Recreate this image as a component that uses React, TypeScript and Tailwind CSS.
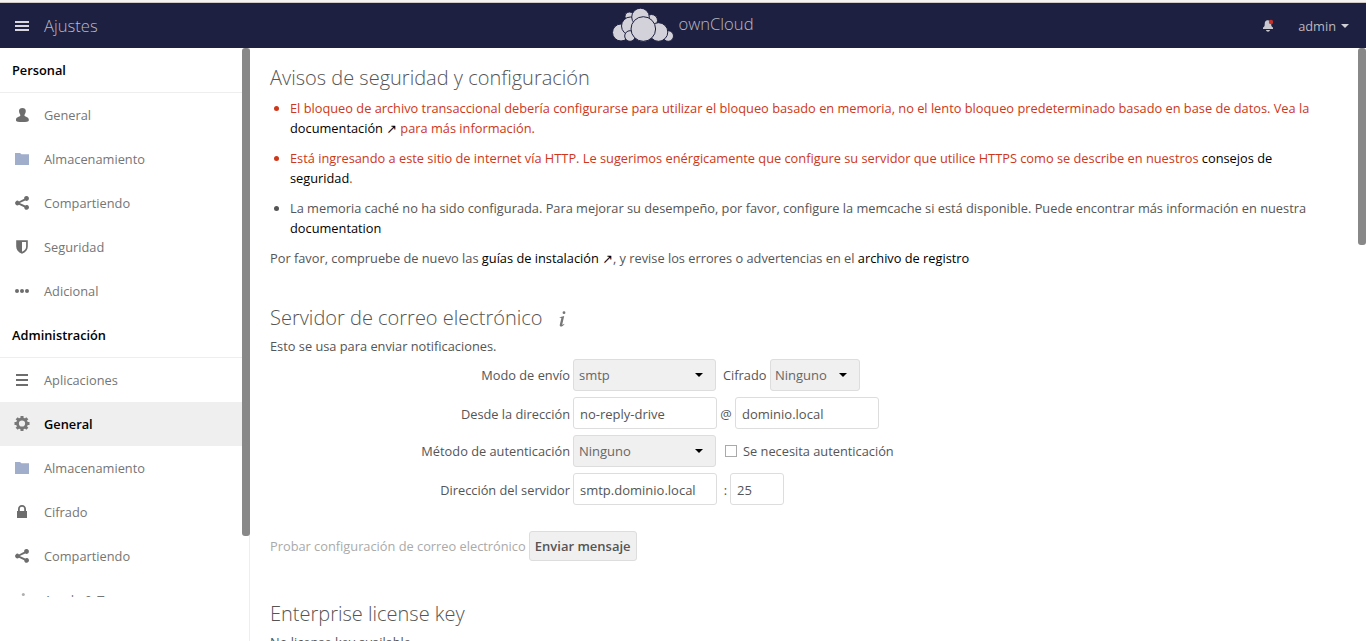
import React from "react";

type IconName = "user" | "folder" | "share" | "shield" | "more" | "list" | "gear" | "lock" | "info";

function NavIcon({ name }: { name: IconName }) {
  return (
    <svg viewBox="0 0 16 16" className="h-4 w-4 shrink-0" fill="#6d6d6d">
      {name === "user" && (
        <path d="M8.400 1C6.300 1 5 2 5 4c0 1.300.4 2.300 1 3.200.4.500.5 1.300.1 1.700C5.500 9.500 2 10.200 2 12.400v1C2 14.400 4.600 15 8.400 15s6.400-.6 6.400-1.600v-1c0-2.200-3.500-2.900-4.100-3.500-.4-.4-.3-1.200.1-1.700.6-.9 1-1.900 1-3.200 0-2-1.300-3-3.400-3z" />
      )}
      {name === "folder" && <path fill="#a0aecb" d="M1 2h5l1.500 1.200H15V14H1z" />}
      {name === "share" && (
        <path d="M12.600 1.100a2.400 2.400 0 0 0-2.400 2.700L5 6.400a2.300 2.300 0 1 0 0 3.300l5.200 2.500a2.400 2.400 0 1 0 1-1.800L5.700 8.100l5.500-2.600a2.400 2.400 0 1 0 1.400-4.400z" />
      )}
      {name === "shield" && (
        <path fillRule="evenodd" d="M2.200 1.200h11.600v6.300c0 3.400-2 5.800-5.800 7.300-3.800-1.500-5.800-3.900-5.800-7.300zM8 2.900v9.900c2.800-1.200 4.100-2.900 4.100-5.300V2.900z" />
      )}
      {name === "more" && (
        <>
          <circle cx="3" cy="8" r="2" />
          <circle cx="8" cy="8" r="2" />
          <circle cx="13" cy="8" r="2" />
        </>
      )}
      {name === "list" && <path d="M2 2h12v2H2zM2 7h12v2H2zM2 12h12v2H2z" />}
      {name === "gear" && (
        <g fill="none" stroke="#777">
          <circle cx="8" cy="7.500" r="4.500" strokeWidth="2.800" />
          <path
            strokeWidth="3"
            d="M8 0v2.500M8 12.500V15M.5 7.500H3M13 7.500h2.500M2.700 2.200l1.800 1.800M11.500 11l1.800 1.800M13.300 2.200 11.500 4M4.500 11l-1.800 1.800"
          />
        </g>
      )}
      {name === "lock" && (
        <path fillRule="evenodd" d="M8 1C5.500 1 4 2.700 4 5v2H3v7h10V7h-1V5c0-2.300-1.500-4-4-4zm0 1.800c1.400 0 2.200.9 2.200 2.200v2H5.800V5c0-1.300.8-2.200 2.200-2.200z" />
      )}
      {name === "info" && (
        <g opacity=".55">
          <circle cx="9.300" cy="2.500" r="1.500" />
          <path d="M6 6h4L8.500 14H6z" />
        </g>
      )}
    </svg>
  );
}

const personal: [IconName, string][] = [
  ["user", "General"],
  ["folder", "Almacenamiento"],
  ["share", "Compartiendo"],
  ["shield", "Seguridad"],
  ["more", "Adicional"],
];

const admin: [IconName, string, boolean?][] = [
  ["list", "Aplicaciones"],
  ["gear", "General", true],
  ["folder", "Almacenamiento"],
  ["lock", "Cifrado"],
  ["share", "Compartiendo"],
  ["info", "Ayuda & Trucos"],
];

function NavItem({ icon, label, active }: { icon: IconName; label: string; active?: boolean }) {
  return (
    <li
      className={
        active
          ? "flex h-11 shrink-0 items-center gap-3.5 bg-[#efefef] pl-3.5 font-semibold text-black"
          : "flex h-11 shrink-0 items-center gap-3.5 pl-3.5 text-[#757575]"
      }
    >
      <NavIcon name={icon} />
      <span>{label}</span>
    </li>
  );
}

function NavHeading({ children }: { children: React.ReactNode }) {
  return (
    <li className="flex h-[45px] shrink-0 items-center border-b border-[#eeeeee] pl-3 font-semibold text-black">
      {children}
    </li>
  );
}

function CloudLogo() {
  return (
    <svg width="62" height="34" viewBox="0 0 62 34" fill="#d3d2da" stroke="#1d2040" strokeWidth="1">
      <circle cx="17.500" cy="8.500" r="4.500" />
      <circle cx="39.500" cy="12.500" r="6" />
      <circle cx="9" cy="24.500" r="8.500" />
      <circle cx="56.200" cy="28" r="5.300" />
      <circle cx="18.500" cy="18" r="9" />
      <circle cx="18" cy="28" r="5.300" />
      <circle cx="28.500" cy="9" r="8.800" />
      <circle cx="46.500" cy="24" r="9.300" />
      <circle cx="31.300" cy="21" r="12.300" />
    </svg>
  );
}

function Caret({ className }: { className: string }) {
  return (
    <svg width="8" height="4" viewBox="0 0 8 4" className={className}>
      <path d="M0 0h8L4 4z" fill="currentColor" />
    </svg>
  );
}

function Select({ label, className }: { label: string; className: string }) {
  return (
    <div
      className={`flex h-8 items-center justify-between rounded-[3px] border border-[#dddddd] bg-[#f0f0f0] pr-3 text-[13px] text-[#666] ${className}`}
    >
      <span>{label}</span>
      <Caret className="text-black" />
    </div>
  );
}

function Field({ value, className }: { value: string; className: string }) {
  return (
    <input
      defaultValue={value}
      className={`h-8 rounded-[3px] border border-[#dddddd] bg-white px-1.5 pt-0.5 text-[13px] text-[#555] outline-none ${className}`}
    />
  );
}

function Row({ label, lowered, children }: { label: string; lowered?: boolean; children: React.ReactNode }) {
  return (
    <div className="flex h-[38px] items-start">
      <label
        className={
          lowered
            ? "mr-[3px] flex h-8 w-[300px] items-center justify-end pt-0.5"
            : "mr-[3px] flex h-8 w-[300px] items-center justify-end"
        }
      >
        {label}
      </label>
      {children}
    </div>
  );
}

function DocLink({ children }: { children: React.ReactNode }) {
  return <a className="text-black">{children}</a>;
}

export default function App() {
  return (
    <div className="flex h-[641px] w-[1366px] flex-col overflow-hidden bg-white font-['Open_Sans','DejaVu_Sans',sans-serif] text-[12.805px] leading-5 whitespace-nowrap text-[#555]">
      <div className="h-[3px] shrink-0 border-b border-[#cfc9c7] bg-[#f5f3f1]" />
      <header className="grid h-[45px] shrink-0 grid-cols-3 bg-[#1d2040] text-[#b9b8c3]">
        <div className="flex items-center pl-[15px]">
          <svg width="14" height="10" viewBox="0 0 14 10" fill="#d8d7de">
            <path d="M0 0h14v2H0zM0 4h14v2H0zM0 8h14v2H0z" />
          </svg>
          <span className="ml-[15px] pt-px text-[16.64px] font-light">Ajustes</span>
        </div>
        <div className="flex justify-center pt-[5px]">
          <CloudLogo />
          <span className="mt-1.5 ml-1 text-[16.64px] font-light">ownCloud</span>
        </div>
        <div className="flex items-center justify-end pr-[17px]">
          <svg width="12" height="13" viewBox="0 0 12 13" className="mr-6">
            <path fill="#c9c8d0" d="M5 1.200c2.500-.4 4.200 1.300 4.200 4.000 0 1.800.5 2.700 1.800 3.300v1.500H1V8.500c1.300-.6 1.700-1.500 1.700-3.300C2.700 3 3.500 1.600 5 1.200zM4 11h4c-.3 1.200-1 1.700-2 1.700S4.300 12.200 4 11z" />
            <circle cx="9" cy="3" r="2.200" fill="#c4322b" />
          </svg>
          <span>admin</span>
          <Caret className="ml-[5px] text-[#d0cfd6]" />
        </div>
      </header>
      <div className="flex min-h-0 grow">
        <aside className="flex w-[250px] shrink-0 items-start border-r border-[#eeeeee]">
          <ul className="flex h-[549px] w-[242px] shrink-0 flex-col overflow-hidden">
            <NavHeading>Personal</NavHeading>
            {personal.map(([icon, label]) => (
              <NavItem key={label} icon={icon} label={label} />
            ))}
            <NavHeading>Administración</NavHeading>
            {admin.map(([icon, label, active]) => (
              <NavItem key={label} icon={icon} label={label} active={active} />
            ))}
          </ul>
          <div className="-mr-px h-[488px] w-2 shrink-0 rounded-[3px] bg-[#888888]" />
        </aside>
        <main className="min-w-0 grow overflow-hidden pl-5">
          <h2 className="mt-[18px] h-6 text-[20px] leading-6 font-light">Avisos de seguridad y configuración</h2>
          <ul className="mt-2 ml-5 flex list-disc flex-col gap-2.5">
            <li className="text-[#ce3719]">
              El bloqueo de archivo transaccional debería configurarse para utilizar el bloqueo basado en memoria, no el
              lento bloqueo predeterminado basado en base de datos. Vea la
              <br />
              <DocLink>documentación ↗</DocLink> para más información.
            </li>
            <li className="text-[#ce3719]">
              Está ingresando a este sitio de internet vía HTTP. Le sugerimos enérgicamente que configure su servidor que
              utilice HTTPS como se describe en nuestros <DocLink>consejos de</DocLink>
              <br />
              <DocLink>seguridad</DocLink>.
            </li>
            <li>
              La memoria caché no ha sido configurada. Para mejorar su desempeño, por favor, configure la memcache si está
              disponible. Puede encontrar más información en nuestra
              <br />
              <DocLink>documentation</DocLink>
            </li>
          </ul>
          <p className="mt-2.5">
            Por favor, compruebe de nuevo las <DocLink>guías de instalación ↗</DocLink>, y revise los errores o
            advertencias en el <DocLink>archivo de registro</DocLink>
          </p>

          <div className="mt-[38px] flex h-6 items-center">
            <h2 className="text-[20px] leading-6 font-light">Servidor de correo electrónico</h2>
            <svg width="8" height="16" viewBox="0 0 8 16" fill="#777" className="mt-px ml-4">
              <circle cx="5" cy="1.700" r="1.400" />
              <path d="M.7 6.200 5.200 5 3.300 13.300c-.2.900.6.500 1.800-.6l.3.500C4 15 2.700 15.700 1.700 15.500c-1-.2-1.100-1-.8-2.200L2.300 7.500c.2-.8-.4-.8-1.500-.6z" />
            </svg>
          </div>
          <p className="mt-1.5">Esto se usa para enviar notificaciones.</p>
          <div className="mt-[3px]">
            <Row label="Modo de envío">
              <Select label="smtp" className="w-[143px] pl-[5px]" />
              <span className="mr-[3px] ml-[7px] flex h-8 w-11 items-center">Cifrado</span>
              <Select label="Ninguno" className="w-[90px] pl-1" />
            </Row>
            <Row label="Desde la dirección" lowered>
              <Field value="no-reply-drive" className="w-36" />
              <span className="flex h-8 w-[18px] items-center justify-center pt-0.5">@</span>
              <Field value="dominio.local" className="w-36" />
            </Row>
            <Row label="Método de autenticación">
              <Select label="Ninguno" className="w-[143px] pl-[5px]" />
              <label className="ml-[9px] flex h-8 items-center gap-1.5">
                <span className="h-3 w-3 border border-[#aaa] bg-white" />
                Se necesita autenticación
              </label>
            </Row>
            <Row label="Dirección del servidor" lowered>
              <Field value="smtp.dominio.local" className="w-36" />
              <span className="flex h-8 w-[13px] items-center justify-end pt-0.5 pr-[3px]">:</span>
              <Field value="25" className="w-[54px]" />
            </Row>
          </div>
          <div className="mt-5 flex h-[30px] items-center">
            <span className="mr-[3px] text-[#aaa]">Probar configuración de correo electrónico</span>
            <button className="h-[30px] w-[108px] rounded-[3px] border border-[#dddddd] bg-[#f0f0f0] text-[13px] font-semibold text-[#555]">
              Enviar mensaje
            </button>
          </div>
          <h2 className="mt-[41px] h-6 text-[20px] leading-6 font-light">Enterprise license key</h2>
          <p className="mt-1.5">No license key available.</p>
        </main>
        <div className="h-[197px] w-2 shrink-0 rounded-[3px] bg-[#888888]" />
      </div>
    </div>
  );
}
